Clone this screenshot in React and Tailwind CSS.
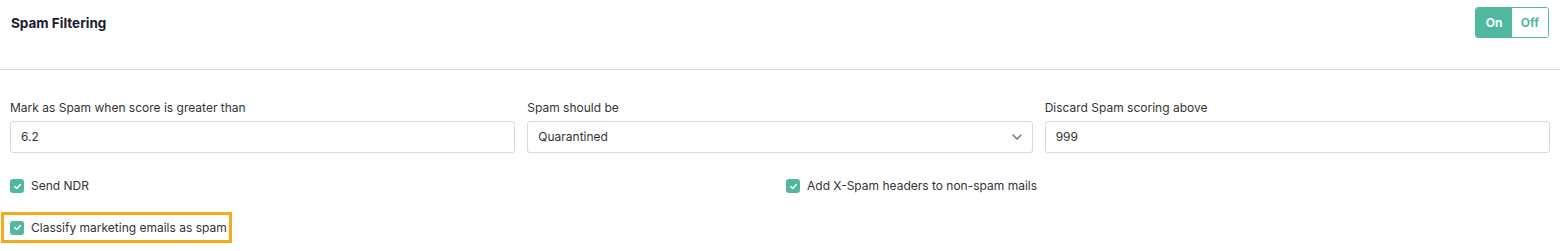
import React, { useState } from 'react';

const font = { fontFamily: 'Inter, "Noto Sans", sans-serif' };

function Check({ label }) {
  return (
    <label className="flex items-center gap-[7px] text-[12px] text-[#333] cursor-pointer whitespace-nowrap">
      <span className="w-[14px] h-[14px] rounded-[3px] bg-[#4fb89e] flex items-center justify-center">
        <svg width="9" height="9" viewBox="0 0 10 10" fill="none">
          <path d="M2 5.2 L4.2 7.2 L8 3" stroke="white" strokeWidth="1.8" strokeLinecap="round" strokeLinejoin="round" />
        </svg>
      </span>
      {label}
    </label>
  );
}

export default function App() {
  const [on, setOn] = useState(true);

  return (
    <div className="w-[1560px] h-[251px] bg-white overflow-hidden" style={font}>
      <div className="flex justify-between items-start h-[69px] pl-[11px] pr-[11px] pt-[7px]">
        <h2 className="text-[13.5px] font-bold text-[#1b1b2f] leading-[33px]">Spam Filtering</h2>
        <div className="flex h-[31px] w-[74px] rounded-[3px] border border-[#4fb89e] overflow-hidden text-[12px] font-bold">
          <button
            onClick={() => setOn(true)}
            className={`w-[36px] ${on ? 'bg-[#4fb89e] text-white' : 'bg-white text-[#4fb89e]'}`}
          >
            On
          </button>
          <button
            onClick={() => setOn(false)}
            className={`flex-1 ${!on ? 'bg-[#4fb89e] text-white' : 'bg-white text-[#4fb89e]'}`}
          >
            Off
          </button>
        </div>
      </div>

      <div className="border-t border-[#d6d6d6]" />

      <div className="grid grid-cols-3 gap-x-3 px-[10px] pt-[30px]">
        <div>
          <div className="text-[12px] leading-4 text-[#333] mb-[5px]">Mark as Spam when score is greater than</div>
          <div className="h-8 border border-[#d9d9d9] rounded-[3px] flex items-center px-[10px] text-[12px] text-[#333]">6.2</div>
        </div>
        <div>
          <div className="text-[12px] leading-4 text-[#333] mb-[5px]">Spam should be</div>
          <div className="h-8 border border-[#d9d9d9] rounded-[3px] flex items-center justify-between pl-[10px] pr-[10px] text-[12px] text-[#333]">
            <span>Quarantined</span>
            <svg width="10" height="6" viewBox="0 0 10 6" fill="none">
              <path d="M1 1 L5 5 L9 1" stroke="#666" strokeWidth="1.2" strokeLinecap="round" strokeLinejoin="round" />
            </svg>
          </div>
        </div>
        <div>
          <div className="text-[12px] leading-4 text-[#333] mb-[5px]">Discard Spam scoring above</div>
          <div className="h-8 border border-[#d9d9d9] rounded-[3px] flex items-center px-[10px] text-[12px] text-[#333]">999</div>
        </div>
      </div>

      <div className="grid grid-cols-2 gap-x-3 px-[10px] pt-[23px]">
        <div className="h-5 flex items-center">
          <Check label="Send NDR" />
        </div>
        <div className="h-5 flex items-center">
          <Check label="Add X-Spam headers to non-spam mails" />
        </div>
      </div>

      <div className="pt-[16px] pl-[1px]">
        <div className="inline-flex items-center h-[31px] w-[231px] border-[3px] border-[#f5a81c] pl-[6px]">
          <Check label="Classify marketing emails as spam" />
        </div>
      </div>
    </div>
  );
}
